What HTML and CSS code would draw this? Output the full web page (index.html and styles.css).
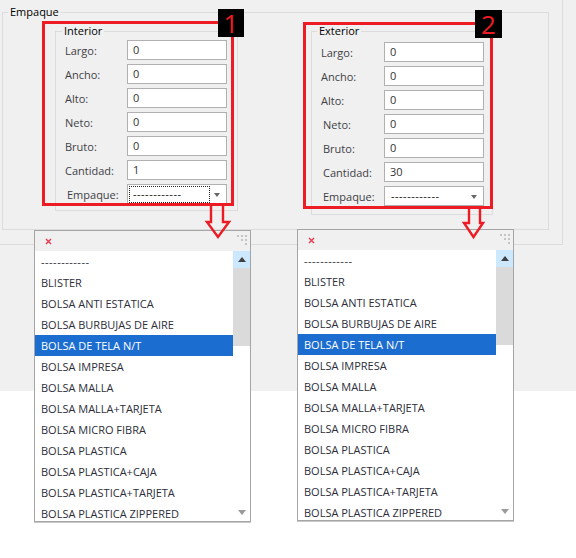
FILE: index.html
```
<!DOCTYPE html>
<html lang="es">
<head>
<meta charset="utf-8">
<title>Empaque</title>
<link rel="stylesheet" href="styles.css">
</head>
<body>
<div class="window">
  <div class="frame">
    <div class="group outer">
      <span class="legend">Empaque</span>
      <div class="cols">
        <div class="group inner interior">
          <span class="legend">Interior</span>
          <div class="row"><span class="lbl">Largo:</span><span class="field">0</span></div>
          <div class="row"><span class="lbl">Ancho:</span><span class="field">0</span></div>
          <div class="row"><span class="lbl">Alto:</span><span class="field">0</span></div>
          <div class="row"><span class="lbl">Neto:</span><span class="field">0</span></div>
          <div class="row"><span class="lbl">Bruto:</span><span class="field">0</span></div>
          <div class="row"><span class="lbl">Cantidad:</span><span class="field">1</span></div>
          <div class="row"><span class="lbl lbl-combo">Empaque:</span><span class="field combo"><span class="focus dash">------------</span><span class="caret"></span></span></div>
        </div>
        <div class="group inner exterior">
          <span class="legend">Exterior</span>
          <div class="row"><span class="lbl">Largo:</span><span class="field">0</span></div>
          <div class="row"><span class="lbl">Ancho:</span><span class="field">0</span></div>
          <div class="row row-gap"><span class="lbl">Alto:</span><span class="field">0</span></div>
          <div class="row"><span class="lbl ind">Neto:</span><span class="field">0</span></div>
          <div class="row"><span class="lbl ind">Bruto:</span><span class="field">0</span></div>
          <div class="row"><span class="lbl ind">Cantidad:</span><span class="field">30</span></div>
          <div class="row"><span class="lbl ind">Empaque:</span><span class="field combo"><span class="plain dash">------------</span><span class="caret"></span></span></div>
        </div>
      </div>
    </div>
  </div>

  <div class="popup popup-1">
    <div class="pop-head">
      <svg class="close" width="7" height="7" viewBox="0 0 7 7"><path d="M1 1L6 6M6 1L1 6" stroke="#e8384f" stroke-width="1.4" fill="none"/></svg>
      <span class="grip"><i></i><i></i><i></i><i></i><i></i><i></i></span>
    </div>
    <div class="pop-body">
      <ul class="items">
        <li class="dash">------------</li>
        <li>BLISTER</li>
        <li>BOLSA ANTI ESTATICA</li>
        <li>BOLSA BURBUJAS DE AIRE</li>
        <li class="sel">BOLSA DE TELA N/T</li>
        <li>BOLSA IMPRESA</li>
        <li>BOLSA MALLA</li>
        <li>BOLSA MALLA+TARJETA</li>
        <li>BOLSA MICRO FIBRA</li>
        <li>BOLSA PLASTICA</li>
        <li>BOLSA PLASTICA+CAJA</li>
        <li>BOLSA PLASTICA+TARJETA</li>
        <li>BOLSA PLASTICA ZIPPERED</li>
      </ul>
      <div class="vscroll">
        <span class="sb-up"><span class="tri-up"></span></span>
        <span class="sb-thumb"></span>
        <span class="sb-track"></span>
        <span class="sb-down"><span class="tri-down"></span></span>
      </div>
    </div>
  </div>

  <div class="popup popup-2">
    <div class="pop-head">
      <svg class="close" width="7" height="7" viewBox="0 0 7 7"><path d="M1 1L6 6M6 1L1 6" stroke="#e8384f" stroke-width="1.4" fill="none"/></svg>
      <span class="grip"><i></i><i></i><i></i><i></i><i></i><i></i></span>
    </div>
    <div class="pop-body">
      <ul class="items">
        <li class="dash">------------</li>
        <li>BLISTER</li>
        <li>BOLSA ANTI ESTATICA</li>
        <li>BOLSA BURBUJAS DE AIRE</li>
        <li class="sel">BOLSA DE TELA N/T</li>
        <li>BOLSA IMPRESA</li>
        <li>BOLSA MALLA</li>
        <li>BOLSA MALLA+TARJETA</li>
        <li>BOLSA MICRO FIBRA</li>
        <li>BOLSA PLASTICA</li>
        <li>BOLSA PLASTICA+CAJA</li>
        <li>BOLSA PLASTICA+TARJETA</li>
        <li>BOLSA PLASTICA ZIPPERED</li>
      </ul>
      <div class="vscroll">
        <span class="sb-up"><span class="tri-up"></span></span>
        <span class="sb-thumb"></span>
        <span class="sb-track"></span>
        <span class="sb-down"><span class="tri-down"></span></span>
      </div>
    </div>
  </div>

  <div class="mark mark-1"></div>
  <div class="badge badge-1">1</div>
  <div class="mark mark-2"></div>
  <div class="badge badge-2">2</div>

  <svg class="arrow arrow-1" width="40" height="40" viewBox="0 0 40 40">
    <polyline points="11,3 11,20 7,20 18,35 29,20 23,20 23,3" fill="none" stroke="#ed1c24" stroke-width="2.4" stroke-linejoin="miter"/>
  </svg>
  <svg class="arrow arrow-2" width="40" height="40" viewBox="0 0 40 40">
    <polyline points="19,6 19,21 14,21 23.5,35 33,21 30,21 30,6" fill="none" stroke="#ed1c24" stroke-width="2.4" stroke-linejoin="miter"/>
  </svg>
</div>
</body>
</html>
```

FILE: styles.css
```
* { box-sizing: border-box; }

html, body {
  margin: 0;
  padding: 0;
}

body {
  width: 576px;
  height: 558px;
  background: #ffffff;
  font-family: "Open Sans", "Noto Sans", sans-serif;
  font-size: 11px;
  color: #333;
  overflow: hidden;
}

.window {
  position: relative;
  height: 391px;
  background: #f0f0f0;
}

.frame {
  width: 563px;
  height: 245px;
  border-right: 1px solid #dcdcdc;
  border-bottom: 1px solid #dcdcdc;
  padding: 12px 0 0 2px;
}

.group {
  position: relative;
  border: 1px solid #dcdcdc;
}

.legend {
  position: absolute;
  top: -9px;
  left: 5px;
  padding: 0 2px;
  line-height: 16px;
  font-size: 11px;
  color: #000;
  background: #f0f0f0;
  white-space: nowrap;
}

.outer {
  width: 547px;
  height: 218px;
}

.cols {
  display: flex;
  align-items: flex-start;
  gap: 73px;
  padding: 18px 0 0 52px;
}

.interior {
  width: 183px;
  height: 180px;
  padding: 8px 0 0 9px;
}

.interior .legend { left: 6px; }

.exterior {
  width: 182px;
  height: 184px;
  padding: 10px 0 0 9px;
}

.row {
  display: flex;
  align-items: center;
  height: 20px;
  margin-bottom: 4px;
}

.row-gap { margin-top: 2px; }

.lbl {
  width: 62px;
  color: #3f3f46;
  white-space: nowrap;
}

.exterior .lbl { width: 63px; }

.lbl.ind { padding-left: 2px; }
.lbl-combo { padding-left: 2px; }

.field {
  position: relative;
  display: flex;
  align-items: center;
  width: 100px;
  height: 20px;
  border: 1px solid #b0b0b0;
  background: #ffffff;
  padding-left: 5px;
  color: #333;
  line-height: 16px;
}

.combo {
  padding-left: 1px;
}

.dash { letter-spacing: 0.5px; }

.focus {
  display: flex;
  align-items: center;
  width: 81px;
  height: 17px;
  padding-left: 3px;
  border: 1px dotted #222;
  color: #111;
}

.plain {
  padding-left: 5px;
  color: #111;
}

.caret {
  position: absolute;
  right: 6px;
  top: 8px;
  width: 0;
  height: 0;
  border-left: 3.5px solid transparent;
  border-right: 3.5px solid transparent;
  border-top: 4px solid #666;
}

/* popups */
.popup {
  position: absolute;
  width: 217px;
  height: 292px;
  border: 1px solid #a5a5a5;
  background: #ffffff;
  box-shadow: 0 1px 0 #c8c8c8;
  overflow: hidden;
  display: flex;
  flex-direction: column;
}

.popup-1 { left: 34px; top: 230px; }
.popup-2 { left: 297px; top: 229px; }

.pop-head {
  position: relative;
  height: 20px;
  flex: none;
  background: #f0f0f0;
}

.close {
  position: absolute;
  left: 10px;
  top: 7px;
}

.grip {
  position: absolute;
  right: 3px;
  top: 4px;
  width: 10px;
  height: 10px;
}

.grip i {
  position: absolute;
  width: 2px;
  height: 2px;
  background: #c4c4c4;
}

.grip i:nth-child(1) { left: 0; top: 0; }
.grip i:nth-child(2) { left: 4px; top: 0; }
.grip i:nth-child(3) { left: 8px; top: 0; }
.grip i:nth-child(4) { left: 4px; top: 4px; }
.grip i:nth-child(5) { left: 8px; top: 4px; }
.grip i:nth-child(6) { left: 8px; top: 8px; }

.pop-body {
  display: flex;
  flex: 1;
  min-height: 0;
}

.items {
  list-style: none;
  margin: 0;
  padding: 0;
  flex: 1;
  overflow: hidden;
}

.items li {
  height: 21px;
  line-height: 21px;
  padding-left: 6px;
  color: #2e2e3a;
  white-space: nowrap;
}

.items li.sel {
  background: #1c6dd0;
  color: #ffffff;
}

.vscroll {
  width: 17px;
  flex: none;
  display: flex;
  flex-direction: column;
  background: #ffffff;
}

.sb-up, .sb-down {
  display: flex;
  align-items: center;
  justify-content: center;
  height: 17px;
  flex: none;
}

.sb-up { background: #cce8ff; }

.sb-thumb {
  height: 78px;
  flex: none;
  background: #dadada;
}

.sb-track { flex: 1; }

.tri-up {
  width: 0;
  height: 0;
  border-left: 4px solid transparent;
  border-right: 4px solid transparent;
  border-bottom: 5px solid #404040;
}

.tri-down {
  width: 0;
  height: 0;
  border-left: 4px solid transparent;
  border-right: 4px solid transparent;
  border-top: 5px solid #9a9a9a;
}

/* annotations */
.mark {
  position: absolute;
  border: 3px solid #ed1c24;
}

.mark-1 { left: 42px; top: 21px; width: 192px; height: 185px; }
.mark-2 { left: 303px; top: 22px; width: 190px; height: 187px; }

.badge {
  position: absolute;
  width: 26px;
  height: 28px;
  background: #000;
  color: #ed1c24;
  font-family: "Open Sans", sans-serif;
  font-size: 26px;
  line-height: 28px;
  text-align: center;
}

.badge-1 { left: 218px; top: 9px; }
.badge-2 { left: 475px; top: 10px; width: 27px; }

.arrow {
  position: absolute;
}

.arrow-1 { left: 200px; top: 202px; }
.arrow-2 { left: 450px; top: 202px; }
```
